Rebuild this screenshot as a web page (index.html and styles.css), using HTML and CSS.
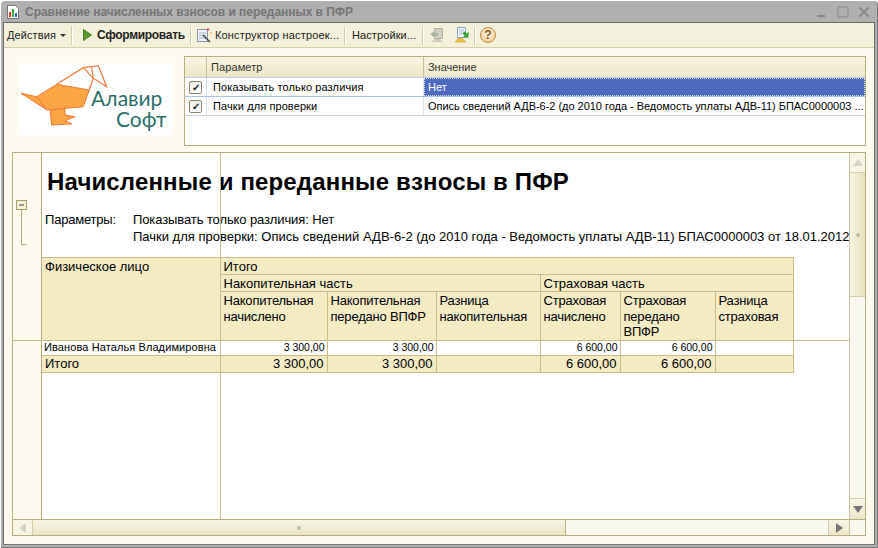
FILE: index.html
```html
<!DOCTYPE html>
<html lang="ru">
<head>
<meta charset="utf-8">
<title>Сравнение начисленных взносов и переданных в ПФР</title>
<link rel="stylesheet" href="styles.css">
</head>
<body>
<div class="window">
  <header class="titlebar">
    <svg class="title-icon" width="14" height="16" viewBox="0 0 14 16"><path d="M1.500 1.500h8l3 3v10h-11z" fill="#fff" stroke="#777"/><rect x="3" y="8" width="2" height="5" fill="#d33"/><rect x="6" y="5" width="2" height="8" fill="#3a3"/><rect x="9" y="9" width="2" height="4" fill="#36c"/></svg>
    <span class="title-text">Сравнение начисленных взносов и переданных в ПФР</span>
    <div class="win-controls">
      <svg width="12" height="12" viewBox="0 0 12 12"><rect x="1" y="9" width="8" height="2" fill="#8a8a8a"/></svg>
      <svg width="12" height="12" viewBox="0 0 12 12"><rect x="1" y="1" width="10" height="10" fill="none" stroke="#8a8a8a"/></svg>
      <svg width="12" height="12" viewBox="0 0 12 12"><path d="M1.500 1.500l9 9M10.500 1.500l-9 9" stroke="#8a8a8a" stroke-width="2"/></svg>
    </div>
  </header>
  <div class="client">
    <nav class="toolbar">
      <span class="tool tool-actions">Действия<i class="caret"></i></span>
      <span class="sep"></span>
      <span class="tool tool-run"><svg width="9" height="12" viewBox="0 0 9 12"><path d="M0.500 0.500L8.500 6L0.500 11.500z" fill="#5c9a2c" stroke="#4a7c25"/></svg><b class="run-label">Сформировать</b></span>
      <span class="sep"></span>
      <span class="tool tool-wiz"><svg width="16" height="16" viewBox="0 0 16 16"><rect x="1.500" y="2.500" width="10" height="12" fill="#eef2f7" stroke="#8b97a8"/><path d="M3 6h7M3 8.500h7M3 11h7" stroke="#9fb0c6"/><path d="M7 8l7 7" stroke="#444" stroke-width="1.500"/><path d="M12 1v3M10.500 2.500h3" stroke="#e0457b"/><path d="M15 5v2" stroke="#e9a13a"/></svg>Конструктор настроек...</span>
      <span class="sep"></span>
      <span class="tool tool-settings">Настройки...</span>
      <span class="sep"></span>
      <span class="tool tool-icons">
        <svg width="16" height="16" viewBox="0 0 16 16"><path d="M5.500 1.500h8v10h-8z" fill="#d0d2c8" stroke="#b0b3a8"/><path d="M1 7l5-3v2h3v3H6v2z" fill="#a9b3a0"/><path d="M2 15l4-3h5l3 3z" fill="#cfcdb8"/></svg>
        <svg width="16" height="16" viewBox="0 0 16 16"><path d="M3.500 0.500h8v10h-8z" fill="#f4f7fb" stroke="#8ea4c4"/><path d="M5 3h5M5 5h5M5 7h3" stroke="#a8bad2"/><path d="M15 5l-1 6-5-1 1.500-1.500-2-2 2-2 2 2z" fill="#3aa335"/><path d="M1 15l4-4h3l4 4z" fill="#ecc340" stroke="#c79a1d" stroke-width=".5"/></svg>
      </span>
      <span class="sep"></span>
      <span class="tool tool-help"><span class="help">?</span></span>
    </nav>
    <main class="content">
      <section class="top-row">
        <div class="logo">
          <svg width="153" height="72" viewBox="0 0 153 72">
            <g fill="#fba544" stroke="#f2793a" stroke-width="1" stroke-linejoin="round">
              <path d="M2 30.300L17.700 33.700L28 47z"/>
              <path d="M17.700 33.700L37.700 21.300L70.300 27L64.300 43.700L28 47z"/>
              <path d="M31 47L32.700 62L52.700 61L46 57.700L56 53.700L46 52V45.500z"/>
            </g>
            <path d="M37.700 21.300L64.300 4.700L79.300 2.700L87.700 23.700L74.300 15.300L70.300 27M64.300 4.700L74.300 15.300M72.700 4L74.300 15.300" fill="none" stroke="#f2793a" stroke-width="1.200"/>
            <text class="logo-text" x="72" y="43">Алавир</text>
            <text class="logo-text" x="97" y="64">Софт</text>
          </svg>
        </div>
        <div class="params">
          <div class="p-row p-head">
            <div class="p-mark"></div>
            <div class="p-name">Параметр</div>
            <div class="p-value">Значение</div>
          </div>
          <div class="p-row p-item p-item-active">
            <div class="p-mark"><span class="check">✓</span></div>
            <div class="p-name">Показывать только различия</div>
            <div class="p-value p-selected">Нет</div>
          </div>
          <div class="p-row p-item">
            <div class="p-mark"><span class="check">✓</span></div>
            <div class="p-name">Пачки для проверки</div>
            <div class="p-value">Опись сведений АДВ-6-2 (до 2010 года - Ведомость уплаты АДВ-11) БПАС0000003 ...</div>
          </div>
        </div>
      </section>
      <section class="report">
        <div class="report-main">
          <div class="gutter">
            <svg class="outline" width="11" height="46" viewBox="0 0 11 46"><rect x="0.500" y="0.500" width="10" height="9" fill="#f5f0d8" stroke="#a89e6c"/><path d="M3 5h5" stroke="#444"/><path d="M5.500 10v34.500H10.500" fill="none" stroke="#b5ab7a"/></svg>
          </div>
          <div class="sheet">
            <h1 class="rep-title">Начисленные и переданные взносы в ПФР</h1>
            <div class="rep-params">
              <div class="rep-label">Параметры:</div>
              <div class="rep-lines">
                <div class="rep-first">Показывать только различия: Нет</div>
                <div>Пачки для проверки: Опись сведений АДВ-6-2 (до 2010 года - Ведомость уплаты АДВ-11) БПАС0000003 от 18.01.2012</div>
              </div>
            </div>
            <table class="grid">
              <colgroup>
                <col class="c1"><col class="c2"><col class="c3"><col class="c4"><col class="c5"><col class="c6"><col class="c7">
              </colgroup>
              <thead>
                <tr class="h17"><th rowspan="3" class="head-first">Физическое лицо</th><th colspan="6">Итого</th></tr>
                <tr class="h17"><th colspan="3">Накопительная часть</th><th colspan="3">Страховая часть</th></tr>
                <tr class="h49">
                  <th>Накопительная начислено</th><th>Накопительная передано ВПФР</th><th>Разница накопительная</th>
                  <th>Страховая начислено</th><th>Страховая передано ВПФР</th><th>Разница страховая</th>
                </tr>
              </thead>
              <tbody>
                <tr class="row-data">
                  <td class="name">Иванова Наталья Владимировна</td><td class="num">3 300,00</td><td class="num">3 300,00</td><td></td><td class="num">6 600,00</td><td class="num">6 600,00</td><td></td>
                </tr>
                <tr class="row-total">
                  <td>Итого</td><td class="num">3 300,00</td><td class="num">3 300,00</td><td></td><td class="num">6 600,00</td><td class="num">6 600,00</td><td></td>
                </tr>
              </tbody>
            </table>
          </div>
          <div class="freeze-v"></div>
          <div class="freeze-h"></div>
        </div>
        <div class="vscroll">
          <div class="sb-btn sb-btn-v"><i class="arrow up dim"></i></div>
          <div class="vthumb"><i class="grip"></i></div>
          <div class="sb-track"></div>
          <div class="sb-btn sb-btn-v sb-down"><i class="arrow down"></i></div>
        </div>
        <div class="hscroll">
          <div class="sb-btn sb-btn-h"><i class="arrow left dim"></i></div>
          <div class="hthumb"><i class="grip"></i></div>
          <div class="sb-track"></div>
          <div class="sb-btn sb-btn-h sb-right"><i class="arrow right"></i></div>
        </div>
        <div class="corner"></div>
      </section>
    </main>
  </div>
</div>
</body>
</html>
```

FILE: styles.css
```css
* { box-sizing: border-box; }
html, body { margin: 0; height: 100%; }
body { background: #fff; overflow: hidden; font-family: "Liberation Sans", Arial, sans-serif; color: #000; }

.window {
  width: 877px; height: 547px; margin: 1px 0 0 1px;
  background: #b0b0b0; border-radius: 4px 4px 0 0;
  padding: 0 2px 2px 2px;
  display: flex; flex-direction: column;
  border-right: 1px solid #777; border-bottom: 1px solid #777;
}
.titlebar { height: 21px; display: flex; align-items: center; padding: 1px 5px 0 3px; flex: none; }
.title-icon { margin-right: 5px; }
.title-text { font-size: 12px; font-weight: bold; color: #757575; letter-spacing: -0.04px; }
.win-controls { margin-left: auto; display: flex; gap: 9px; }

.client { flex: 1; min-height: 0; display: flex; flex-direction: column; background: #fefaf0; border: 1px solid #6a6a6a; border-bottom-color: #777; }

.toolbar { height: 25px; flex: none; background: #f3f0dc; border-bottom: 1px solid #d6d0ab; display: flex; align-items: center; font-size: 11px; color: #222; letter-spacing: 0.1px; }
.tool { display: flex; align-items: center; white-space: nowrap; }
.tool svg { flex: none; }
.tool-actions { padding-left: 3px; width: 67px; }
.caret { margin-left: 4px; border: 3px solid transparent; border-top: 3px solid #333; border-bottom: 0; }
.sep { width: 1px; height: 19px; background: #d3cda8; box-shadow: 1px 0 0 #fff; flex: none; }
.tool-run { padding-left: 11px; gap: 5px; width: 118px; }
.run-label { font-size: 12px; font-weight: bold; color: #222; letter-spacing: -0.3px; }
.tool-wiz { padding-left: 5px; gap: 3px; width: 153px; letter-spacing: 0.15px; }
.tool-settings { padding-left: 7px; width: 77px; }
.tool-icons { padding-left: 6px; gap: 9px; width: 51px; }
.tool-help { padding-left: 5px; }
.help { width: 16px; height: 16px; border-radius: 50%; background: radial-gradient(circle at 50% 40%, #fff6e4, #f3c284); border: 1px solid #c88a44; color: #8a5a20; font-weight: bold; font-size: 12px; line-height: 14px; text-align: center; }

.content { flex: 1; min-height: 0; padding: 8px 8px 0 8px; display: flex; flex-direction: column; gap: 6px; }
.top-row { display: flex; height: 90px; flex: none; }
.logo { width: 153px; height: 72px; margin: 7px 12px 0 7px; background: #fff; flex: none; }
.logo svg { display: block; }
.logo-text { font-family: Lato, "Open Sans", sans-serif; font-size: 21px; fill: #2c6f6b; }

.params { flex: 1; min-width: 0; background: #fff; border: 1px solid #b8ae80; }
.p-row { display: flex; font-size: 11px; line-height: 19px; }
.p-mark { width: 22px; flex: none; display: flex; align-items: center; justify-content: center; border-right: 1px solid #d5dde8; }
.p-name { width: 217px; flex: none; padding-left: 6px; border-right: 1px solid #e0e4ea; white-space: nowrap; letter-spacing: 0.1px; }
.p-value { flex: 1; min-width: 0; padding-left: 4px; white-space: nowrap; overflow: hidden; letter-spacing: -0.03px; }
.p-head { height: 21px; line-height: 20px; background: linear-gradient(#f7f4e4, #ece6c6); border-bottom: 1px solid #b9d0ea; color: #333; }
.p-head .p-mark { border-right: 1px solid #c8c09a; }
.p-head .p-name { padding-left: 4px; border-right: 1px solid #c8c09a; }
.p-item { height: 19px; border-bottom: 1px solid #ccd3dd; }
.p-item-active { border-bottom-color: #a9c4e4; }
.p-selected { background: #4f69c1; color: #fff; outline: 1px dotted #cfd8ee; outline-offset: -1px; }
.check { width: 13px; height: 13px; border: 1px solid #8a8468; border-radius: 2px; background: linear-gradient(#f0f0ea, #fff); font-size: 10px; line-height: 11px; text-align: center; font-weight: bold; color: #222; }

.report {
  width: 854px; height: 384px; flex: none; border: 1px solid #b8ae80; background: #fff;
  display: grid; grid-template-columns: 836px 16px; grid-template-rows: 366px 16px;
}
.report-main { position: relative; display: flex; overflow: hidden; min-width: 0; }
.gutter { width: 28px; flex: none; background: #fefaf0; padding: 47px 0 0 3px; }
.outline { display: block; }
.sheet { flex: 1; min-width: 0; border-left: 1px solid #b8ae80; overflow: hidden; }
.rep-title { margin: 16px 0 0 5px; font-size: 24px; line-height: 26px; font-weight: bold; letter-spacing: 0.15px; white-space: nowrap; }
.rep-params { display: flex; margin: 16px 0 0 3px; font-size: 13px; line-height: 17px; white-space: nowrap; }
.rep-label { width: 88px; flex: none; letter-spacing: -0.2px; }
.rep-first { letter-spacing: -0.1px; }
.grid { margin-top: 12px; border-collapse: collapse; table-layout: fixed; width: 751px; font-size: 13px; }
.c1 { width: 178px; } .c2 { width: 107px; } .c3 { width: 109px; } .c4 { width: 104px; } .c5 { width: 80px; } .c6 { width: 95px; } .c7 { width: 78px; }
.grid th, .grid td { border: 1px solid #c9bf86; padding: 0 3px; overflow: hidden; }
.grid th { background: #f3ebc4; font-weight: normal; text-align: left; vertical-align: top; padding-top: 2px; line-height: 14px; }
.grid .head-first { border-left: 0; line-height: 16px; padding-top: 1px; }
.grid td:first-child { border-left: 0; white-space: nowrap; padding-left: 3px; }
.h17 { height: 17px; }
.h49 { height: 48px; }
.grid .h49 th { padding-top: 1px; line-height: 15.660px; letter-spacing: -0.2px; }
.row-data { height: 15px; background: #fff; }
.row-data td { font-size: 10.500px; line-height: 13px; padding-right: 2px; }
.grid .row-data .name { font-size: 11px; letter-spacing: 0.1px; padding-left: 2px; }
.row-total { height: 17px; background: #f3ebc4; }
.row-total td { line-height: 15px; }
.row-total .num { font-size: 13px; }
.num { text-align: right; }
.freeze-v { position: absolute; left: 207px; top: 0; bottom: 0; width: 1px; background: #c9bf86; }
.freeze-h { position: absolute; left: 0; right: 0; top: 187px; height: 1px; background: #c9bf86; }

.vscroll { display: flex; flex-direction: column; border-left: 1px solid #c9c4a4; background: #f8f7f0; }
.hscroll { display: flex; border-top: 1px solid #b8ae80; background: #f8f7f0; }
.sb-track { flex: 1; }
.sb-btn { flex: none; display: flex; align-items: center; justify-content: center; background: #f8f5e6; }
.sb-btn-v { height: 20px; border-bottom: 1px solid #d3cdaa; }
.sb-down { height: 21px; border-top: 1px solid #d3cdaa; border-bottom: 0; background: linear-gradient(#f8f5e6, #ece7cc); }
.sb-btn-h { width: 20px; border-right: 1px solid #d3cdaa; }
.sb-right { width: 21px; border-left: 1px solid #d3cdaa; border-right: 0; background: linear-gradient(#f8f5e6, #ece7cc); }
.vthumb { height: 124px; flex: none; background: linear-gradient(90deg, #f6f3e0, #e7e1bd); border-bottom: 1px solid #d3cdaa; display: flex; align-items: center; justify-content: center; }
.hthumb { width: 533px; flex: none; background: linear-gradient(#f7f4e4, #e9e4c6); border-right: 1px solid #b8ae80; display: flex; align-items: center; justify-content: center; }
.grip { width: 4px; height: 4px; border-radius: 50%; background: #bdbdb0; }
.corner { background: #f8f7f0; border-left: 1px solid #c9c4a4; border-top: 1px solid #b8ae80; }
.arrow { width: 0; height: 0; border: 5px solid transparent; }
.up { border-top: 0; border-bottom: 7px solid #777; }
.down { border-bottom: 0; border-top: 7px solid #777; }
.left { border-left: 0; border-right: 7px solid #777; }
.right { border-right: 0; border-left: 7px solid #777; }
.dim.up { border-bottom-color: #d4d4cc; }
.dim.left { border-right-color: #d4d4cc; }
```
